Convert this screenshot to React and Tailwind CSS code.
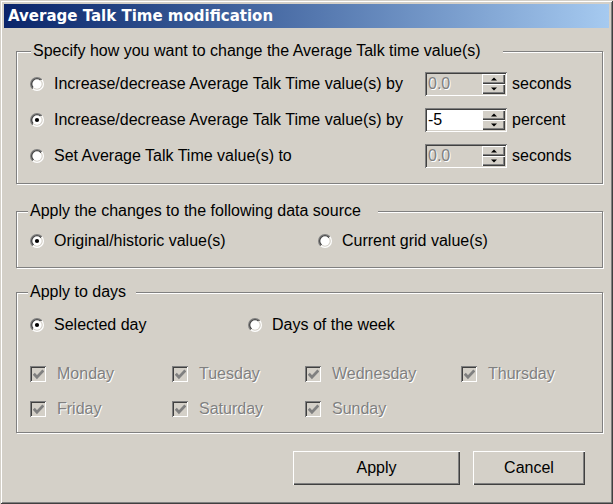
import React from "react";

function Radio({ checked }) {
  return (
    <svg width="14" height="14" viewBox="0 0 12 12" className="shrink-0">
      <defs>
        <linearGradient id="rgo" x1="0" y1="0" x2="1" y2="1">
          <stop offset="0.5" stopColor="#808080" />
          <stop offset="0.5" stopColor="#ffffff" />
        </linearGradient>
        <linearGradient id="rgi" x1="0" y1="0" x2="1" y2="1">
          <stop offset="0.5" stopColor="#404040" />
          <stop offset="0.5" stopColor="#d4d0c8" />
        </linearGradient>
      </defs>
      <circle cx="6" cy="6" r="6" fill="url(#rgo)" />
      <circle cx="6" cy="6" r="5" fill="url(#rgi)" />
      <circle cx="6" cy="6" r="4" fill="#ffffff" />
      {checked && <circle cx="6" cy="6" r="1.8" fill="#000000" />}
    </svg>
  );
}

function RadioLabel({ checked, children, className = "" }) {
  return (
    <div className={"flex items-center gap-[10px] " + className}>
      <Radio checked={checked} />
      <span className="whitespace-nowrap">{children}</span>
    </div>
  );
}

function DisabledCheck({ children }) {
  return (
    <div className="flex items-center gap-[11px]">
      <div className="w-[16px] h-[16px] shrink-0 bg-[#d4d0c8] shadow-[inset_1px_1px_#808080,inset_-1px_-1px_#ffffff,inset_2px_2px_#404040,inset_-2px_-2px_#d4d0c8] flex items-center justify-center">
        <svg width="11" height="11" viewBox="0 0 7 7">
          <path d="M0.5 3 L2.5 5.2 L6.6 0.9" stroke="#808080" strokeWidth="1.8" fill="none" />
        </svg>
      </div>
      <span className="text-[#808080] [text-shadow:1px_1px_0_#ffffff] whitespace-nowrap">{children}</span>
    </div>
  );
}

function Tri({ up }) {
  return (
    <svg width="6" height="4" viewBox="0 0 6 4">
      {up ? <path d="M0 3.5 L3 0.5 L6 3.5 Z" fill="#000" /> : <path d="M0 0.5 L3 3.5 L6 0.5 Z" fill="#000" />}
    </svg>
  );
}

function SpinBtn({ up }) {
  return (
    <div className="flex-1 bg-[#d4d0c8] flex items-center justify-center shadow-[inset_1px_1px_#ffffff,inset_-1px_-1px_#404040,inset_-2px_-2px_#808080]">
      <Tri up={up} />
    </div>
  );
}

function Spin({ value, enabled }) {
  return (
    <div
      className={
        "w-[82px] h-[24px] p-[2px] flex shrink-0 shadow-[inset_1px_1px_#808080,inset_-1px_-1px_#ffffff,inset_2px_2px_#404040,inset_-2px_-2px_#d4d0c8] " +
        (enabled ? "bg-white" : "bg-[#d4d0c8]")
      }
    >
      <div
        className={
          "flex-1 flex items-center pl-[1px] leading-none " +
          (enabled ? "text-black" : "text-[#808080] [text-shadow:1px_1px_0_#ffffff]")
        }
      >
        {value}
      </div>
      <div className="w-[23px] flex flex-col">
        <SpinBtn up />
        <SpinBtn />
      </div>
    </div>
  );
}

const fieldset =
  "border border-[#808080] shadow-[inset_1px_1px_#ffffff,1px_1px_#ffffff] min-w-0";
const legend = "bg-[#d4d0c8] leading-[18px] pl-[2px]";

export default function App() {
  return (
    <div className="w-[613px] h-[504px] bg-[#d4d0c8] p-[4px] flex flex-col font-['Liberation_Sans',Arial,sans-serif] text-[16px] text-black shadow-[inset_1px_1px_#d4d0c8,inset_-1px_-1px_#404040,inset_2px_2px_#ffffff,inset_-2px_-2px_#808080]">
      <div className="h-[24px] shrink-0 bg-linear-to-r from-[#0a246a] to-[#a6caf0] flex items-center pl-[4px]">
        <span className="text-white font-bold text-[15px] font-['DejaVu_Sans',sans-serif] leading-none">
          Average Talk Time modification
        </span>
      </div>

      <div className="flex flex-col pl-[12px] pr-[6px]">
        <fieldset className={fieldset + " mt-[14px] pt-[12px] pb-[15px]"}>
          <legend className={legend + " ml-[14px] pr-[22px]"}>
            Specify how you want to change the Average Talk time value(s)
          </legend>
          <div className="flex flex-col gap-[12px] pl-[13px]">
            <div className="flex items-center h-[24px]">
              <RadioLabel className="w-[395px]">Increase/decrease Average Talk Time value(s) by</RadioLabel>
              <Spin value="0.0" />
              <span className="ml-[5px]">seconds</span>
            </div>
            <div className="flex items-center h-[24px]">
              <RadioLabel checked className="w-[395px]">Increase/decrease Average Talk Time value(s) by</RadioLabel>
              <Spin value="-5" enabled />
              <span className="ml-[5px]">percent</span>
            </div>
            <div className="flex items-center h-[24px]">
              <RadioLabel className="w-[395px]">Set Average Talk Time value(s) to</RadioLabel>
              <Spin value="0.0" />
              <span className="ml-[5px]">seconds</span>
            </div>
          </div>
        </fieldset>

        <fieldset className={fieldset + " mt-[18px] pt-[11px] pb-[16px]"}>
          <legend className={legend + " ml-[11px] pr-[17px]"}>
            Apply the changes to the following data source
          </legend>
          <div className="flex items-center h-[20px] pl-[13px]">
            <RadioLabel checked className="w-[288px]">Original/historic value(s)</RadioLabel>
            <RadioLabel>Current grid value(s)</RadioLabel>
          </div>
        </fieldset>

        <fieldset className={fieldset + " mt-[15px] pt-[14px] pb-[13px]"}>
          <legend className={legend + " ml-[11px] pr-[10px]"}>Apply to days</legend>
          <div className="flex items-center h-[20px] pl-[13px]">
            <RadioLabel checked className="w-[218px]">Selected day</RadioLabel>
            <RadioLabel>Days of the week</RadioLabel>
          </div>
          <div className="grid grid-cols-[142px_133px_156px_1fr] gap-y-[15px] pl-[13px] mt-[29px]">
            <div className="h-[20px] flex items-center"><DisabledCheck>Monday</DisabledCheck></div>
            <div className="h-[20px] flex items-center"><DisabledCheck>Tuesday</DisabledCheck></div>
            <div className="h-[20px] flex items-center"><DisabledCheck>Wednesday</DisabledCheck></div>
            <div className="h-[20px] flex items-center"><DisabledCheck>Thursday</DisabledCheck></div>
            <div className="h-[20px] flex items-center"><DisabledCheck>Friday</DisabledCheck></div>
            <div className="h-[20px] flex items-center"><DisabledCheck>Saturday</DisabledCheck></div>
            <div className="h-[20px] flex items-center"><DisabledCheck>Sunday</DisabledCheck></div>
          </div>
        </fieldset>

        <div className="flex justify-end gap-[13px] mt-[18px] mr-[18px]">
          <button className="w-[167px] h-[34px] bg-[#d4d0c8] text-black shadow-[inset_1px_1px_#ffffff,inset_-1px_-1px_#404040,inset_-2px_-2px_#808080]">
            Apply
          </button>
          <button className="w-[112px] h-[34px] bg-[#d4d0c8] text-black shadow-[inset_1px_1px_#ffffff,inset_-1px_-1px_#404040,inset_-2px_-2px_#808080]">
            Cancel
          </button>
        </div>
      </div>
    </div>
  );
}
